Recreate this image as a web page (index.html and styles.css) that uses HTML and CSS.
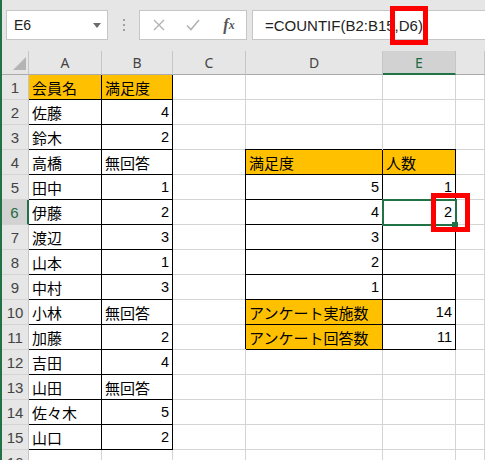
FILE: index.html
```html
<!DOCTYPE html>
<html lang="ja">
<head>
  <meta charset="UTF-8" />
  <title>COUNTIF</title>
  <link rel="stylesheet" href="styles.css">
</head>
<body>
  <div class="app">
    <div class="toolbar">
      <div class="namebox">
        <span>E6</span>
        <svg width="8" height="5" viewBox="0 0 8 5"><path d="M0 0H8L4 5Z" fill="#6b6b6b"/></svg>
      </div>
      <div class="dots"><i></i><i></i><i></i></div>
      <div class="fbtns">
        <span class="btn">
          <svg width="12" height="12" viewBox="0 0 12 12"><path d="M1 1L11 11M11 1L1 11" stroke="#b3b3b3" stroke-width="1.4" fill="none"/></svg>
        </span>
        <span class="btn">
          <svg width="14" height="12" viewBox="0 0 14 12"><path d="M1 6.5L5 10.5L13 1" stroke="#b3b3b3" stroke-width="1.6" fill="none"/></svg>
        </span>
        <span class="btn fx">f<sub>x</sub></span>
      </div>
      <div class="formula">=COUNTIF(B2:B15,D6)<div class="mark"></div></div>
    </div>

    <div class="sheet">
      <div class="corner"><span class="tri"></span></div>
      <div class="h">A</div><div class="h">B</div><div class="h">C</div><div class="h">D</div><div class="h sel">E</div><div class="h"></div>

      <div class="rh">1</div>
      <div class="c b o t">会員名</div><div class="c b o t">満足度</div>
      <div class="c"></div><div class="c"></div><div class="c"></div><div class="c"></div>

      <div class="rh">2</div>
      <div class="c b">佐藤</div><div class="c b n">4</div>
      <div class="c"></div><div class="c"></div><div class="c"></div><div class="c"></div>

      <div class="rh">3</div>
      <div class="c b">鈴木</div><div class="c b n">2</div>
      <div class="c"></div><div class="c"></div><div class="c"></div><div class="c"></div>

      <div class="rh">4</div>
      <div class="c b">高橋</div><div class="c b">無回答</div>
      <div class="c"></div><div class="c b bl o">満足度</div><div class="c b o">人数</div><div class="c"></div>

      <div class="rh">5</div>
      <div class="c b">田中</div><div class="c b n">1</div>
      <div class="c"></div><div class="c b bl n">5</div><div class="c b n">1</div><div class="c"></div>

      <div class="rh cur">6</div>
      <div class="c b">伊藤</div><div class="c b n">2</div>
      <div class="c"></div><div class="c b bl n">4</div>
      <div class="c b n active">2<span class="selbox"></span><span class="handle"></span><span class="redbox"></span></div>
      <div class="c"></div>

      <div class="rh">7</div>
      <div class="c b">渡辺</div><div class="c b n">3</div>
      <div class="c"></div><div class="c b bl n">3</div><div class="c b n"></div><div class="c"></div>

      <div class="rh">8</div>
      <div class="c b">山本</div><div class="c b n">1</div>
      <div class="c"></div><div class="c b bl n">2</div><div class="c b n"></div><div class="c"></div>

      <div class="rh">9</div>
      <div class="c b">中村</div><div class="c b n">3</div>
      <div class="c"></div><div class="c b bl n">1</div><div class="c b n"></div><div class="c"></div>

      <div class="rh">10</div>
      <div class="c b">小林</div><div class="c b">無回答</div>
      <div class="c"></div><div class="c b bl o">アンケート実施数</div><div class="c b n">14</div><div class="c"></div>

      <div class="rh">11</div>
      <div class="c b">加藤</div><div class="c b n">2</div>
      <div class="c"></div><div class="c b bl o">アンケート回答数</div><div class="c b n">11</div><div class="c"></div>

      <div class="rh">12</div>
      <div class="c b">吉田</div><div class="c b n">4</div>
      <div class="c"></div><div class="c"></div><div class="c"></div><div class="c"></div>

      <div class="rh">13</div>
      <div class="c b">山田</div><div class="c b">無回答</div>
      <div class="c"></div><div class="c"></div><div class="c"></div><div class="c"></div>

      <div class="rh">14</div>
      <div class="c b">佐々木</div><div class="c b n">5</div>
      <div class="c"></div><div class="c"></div><div class="c"></div><div class="c"></div>

      <div class="rh">15</div>
      <div class="c b">山口</div><div class="c b n">2</div>
      <div class="c"></div><div class="c"></div><div class="c"></div><div class="c"></div>

      <div class="rh">16</div>
      <div class="c"></div><div class="c"></div>
      <div class="c"></div><div class="c"></div><div class="c"></div><div class="c"></div>
    </div>
  </div>
</body>
</html>
```

FILE: styles.css
```css
body {
  margin: 0;
  width: 485px;
  height: 460px;
  overflow: hidden;
  background: #fff;
  font-family: "Liberation Sans", "Noto Sans CJK JP", sans-serif;
}
.app {
  border-left: 2px solid #217346;
  height: 460px;
  box-sizing: border-box;
}

/* formula bar */
.toolbar {
  height: 51px;
  box-sizing: border-box;
  padding: 10px 0 0 4px;
  background: #e6e6e6;
  display: flex;
  align-items: flex-start;
}
.namebox {
  width: 102px;
  height: 30px;
  box-sizing: border-box;
  background: #fff;
  border: 1px solid #c6c6c6;
  display: flex;
  align-items: center;
  justify-content: space-between;
  padding: 0 6px 0 7px;
  font-size: 14px;
  color: #222;
}
.dots {
  width: 31px;
  height: 30px;
  display: flex;
  flex-direction: column;
  align-items: center;
  justify-content: center;
  gap: 3px;
}
.dots i {
  width: 2px;
  height: 2px;
  background: #a0a0a0;
}
.fbtns {
  width: 108px;
  height: 30px;
  box-sizing: border-box;
  background: #fff;
  border: 1px solid #c6c6c6;
  margin-right: 5px;
  display: flex;
  align-items: center;
  padding-left: 2px;
}
.btn {
  width: 34px;
  display: flex;
  justify-content: center;
  align-items: center;
}
.fx {
  margin-left: 2px;
  font-family: "Liberation Serif", serif;
  font-style: italic;
  font-weight: bold;
  font-size: 16px;
  color: #555;
}
.fx sub {
  font-size: 12px;
  vertical-align: -1px;
}
.formula {
  flex: 1;
  height: 30px;
  box-sizing: border-box;
  background: #fff;
  border: 1px solid #c6c6c6;
  border-right: none;
  padding-left: 12px;
  line-height: 29px;
  font-size: 15px;
  color: #222;
  position: relative;
}
.mark {
  position: absolute;
  left: 137px;
  top: -5px;
  width: 38px;
  height: 39px;
  box-sizing: border-box;
  border: 5px solid #f00;
}

/* sheet */
.sheet {
  display: grid;
  grid-template-columns: 27px 73px 71px 73px 137px 73px 1fr;
  grid-template-rows: 24px;
  grid-auto-rows: 25px;
}
.corner, .h, .rh {
  background: #e6e6e6;
  box-sizing: border-box;
  border-right: 1px solid #c6c6c6;
  display: flex;
  align-items: center;
  justify-content: center;
  color: #444;
}
.corner, .h {
  border-bottom: 1px solid #ababab;
}
.corner {
  justify-content: flex-end;
  align-items: flex-end;
  padding: 0 2px 4px 0;
}
.tri {
  width: 0;
  height: 0;
  border-left: 13px solid transparent;
  border-bottom: 13px solid #b4b4b4;
}
.h {
  font-family: "Noto Sans", sans-serif;
  font-size: 14px;
}
.h.sel {
  background: #d2d2d2;
  border-bottom: 2px solid #217346;
  color: #1e6b41;
}
.rh {
  border-bottom: 1px solid #d4d4d4;
  font-size: 15px;
}
.rh.cur {
  background: #d2d2d2;
  border-right: 2px solid #217346;
  color: #1e6b41;
}
.c {
  box-sizing: border-box;
  border-right: 1px solid #d4d4d4;
  border-bottom: 1px solid #d4d4d4;
  display: flex;
  align-items: center;
  padding: 0 3px 0 3px;
  font-size: 15px;
  white-space: nowrap;
  color: #000;
}
.n {
  justify-content: flex-end;
  font-size: 14.5px;
}
.b {
  border-color: #000;
  box-shadow: 0 -1px 0 #000;
}
.bl {
  box-shadow: -1px -1px 0 #000;
}
.t {
  box-shadow: none;
}
.o {
  background: #ffc000;
}

/* active cell */
.active {
  position: relative;
}
.selbox {
  position: absolute;
  left: -1px;
  top: -1px;
  right: -2px;
  bottom: -2px;
  border: 2px solid #217346;
  z-index: 2;
}
.handle {
  position: absolute;
  right: -3px;
  bottom: -4px;
  width: 6px;
  height: 6px;
  background: #217346;
  z-index: 3;
}
.redbox {
  position: absolute;
  left: 48px;
  top: -7px;
  width: 39px;
  height: 39px;
  box-sizing: border-box;
  border: 5px solid #f00;
  z-index: 4;
}
```
